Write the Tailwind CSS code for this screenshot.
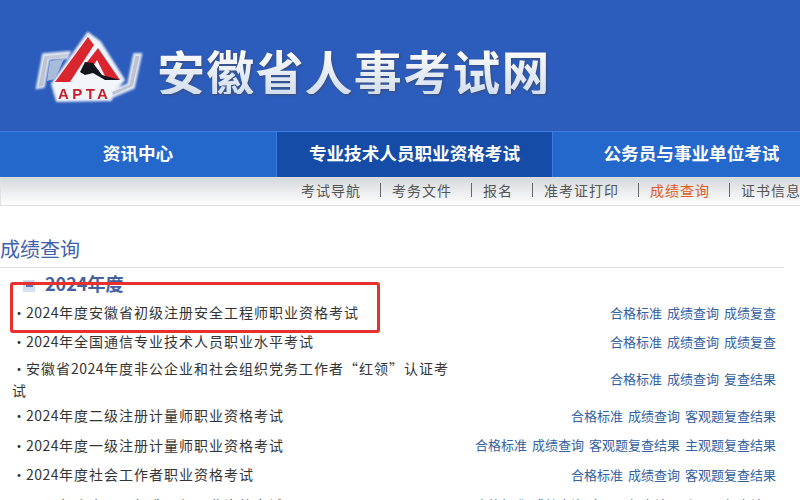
<!DOCTYPE html>
<html lang="zh-CN">
<head>
    <meta charset="UTF-8">
    <title>安徽省人事考试网</title>
    <script src="https://cdn.jsdelivr.net/npm/@tailwindcss/browser@4"></script>
</head>
<body class="w-[800px] h-[500px] overflow-hidden bg-white font-['Noto_Sans_CJK_SC',sans-serif]">
    <!-- 顶部 -->
    <header class="h-[131px] bg-[#2c5cbc] flex items-start pl-[30px] pt-[25px]">
        <svg class="w-[115px] h-[85px] shrink-0" viewBox="30 25 115 85">
            <!-- 灰色外框 -->
            <g class="blur-[1.2px]">
                <path d="M38 87 L44 55 L68 53 L66 57 L48 58 L43 86 Z" fill="#dfe6f3" stroke="#dfe6f3" stroke-width="4"/>
                <path d="M135 55 L140 55 L133 87 L112 96 L111 92 L129 85 Z" fill="#dfe6f3" stroke="#dfe6f3" stroke-width="4"/>
                <path d="M88 33 L100 42 L124 80 L113 92 L111 100 L57 101 L52 84 Z" fill="#f2f5fa" stroke="#e8edf7" stroke-width="2"/>
            </g>
            <g class="blur-[0.4px]">
                <path d="M50 61 L64 59 L55 79 L47 81 Z" fill="#a9bbdb"/>
                <path d="M38.5 87 L44.5 56 L48 56 L43 86 Z" fill="#bcc3cf"/>
                <path d="M45 56 L68 54 L66 57 L47 59 Z" fill="#c5cbd6"/>
                <path d="M135.5 56 L139.5 56 L132.5 86 L113 95 L112 92 L129.5 85 Z" fill="#bcc3cf"/>
                <path d="M88 37 L94 45 L70 82 L55 82 Z" fill="#d8252e"/>
                <path d="M98 48 L120 80 L107 80 L97 60 L88 74 L84 66 Z" fill="#d8252e"/>
                <path d="M80 72 L85 62 L93 63 L102 75 L120 80 L105 80 L93 73 L85 75 Z" fill="#15151d"/>
            </g>
            <text x="58" y="99" font-size="15" font-weight="700" letter-spacing="3.4" fill="#c4202c" font-family="Liberation Sans" class="blur-[0.4px]">APTA</text>
        </svg>
        <h1 class="ml-[12px] mt-[21px] text-[48px] leading-none font-bold tracking-[1.2px] bg-gradient-to-b from-white to-[#d3deed] bg-clip-text text-transparent drop-shadow-[1px_1px_1px_#3d4c72]">安徽省人事考试网</h1>
    </header>

    <!-- 主导航 -->
    <nav class="h-[46px] flex w-[830px] bg-[#2468cc] border-t border-[#3f7ade] text-white text-[17.6px] font-bold">
        <a class="w-[276px] flex items-center justify-center pb-[2px]">资讯中心</a>
        <a class="w-[277px] flex items-center justify-center pb-[2px] bg-[#144ca8] border-x border-[#3f7ade]">专业技术人员职业资格考试</a>
        <a class="w-[277px] flex items-center justify-center pb-[2px]">公务员与事业单位考试</a>
    </nav>

    <!-- 子导航 -->
    <div class="h-[29px] w-[860px] flex items-center pl-[300px] pb-[3px] border-y border-l border-[#e0e0e0] bg-gradient-to-b from-[#d6d9dc] to-white text-[14px] tracking-[1px] text-[#555] whitespace-nowrap">
        <a>考试导航</a><i class="w-px h-[14px] bg-[#666] ml-[19px] mr-[11px]"></i>
        <a>考务文件</a><i class="w-px h-[14px] bg-[#666] ml-[19px] mr-[11px]"></i>
        <a>报名</a><i class="w-px h-[14px] bg-[#666] ml-[19px] mr-[11px]"></i>
        <a>准考证打印</a><i class="w-px h-[14px] bg-[#666] ml-[19px] mr-[11px]"></i>
        <a class="text-[#e0581c]">成绩查询</a><i class="w-px h-[14px] bg-[#666] ml-[19px] mr-[11px]"></i>
        <a>证书信息</a>
    </div>

    <main class="relative pt-[30px]">
        <h2 class="h-[32px] border-b border-[#ddd] text-[20px] leading-[26px] text-[#3d62ab] w-[784px]">成绩查询</h2>
        <div class="h-[30px] flex items-center pl-[23px]">
            <span class="w-[12px] h-[12px] mt-[6px] bg-gradient-to-b from-[#bccbe8] to-[#dbe4f4] border border-[#d3ddf0] flex items-center justify-center"><span class="w-[7px] h-[2px] bg-[#6078b0]"></span></span>
            <span class="ml-[10px] text-[18px] font-bold text-[#46609f]">2024年度</span>
        </div>
        <ul class="w-[776px] text-[14px] tracking-[1px] text-[#333]">
            <li class="h-[29px] flex items-center justify-between pl-[12px]">
                <span><span class="inline-block w-[14px] text-center">·</span><span class="tracking-[0.5px]">2024</span>年度安徽省初级注册安全工程师职业资格考试</span>
                <span class="flex gap-[5px] text-[13px] tracking-normal text-[#33619f]"><a>合格标准</a><a>成绩查询</a><a>成绩复查</a></span>
            </li>
            <li class="h-[29px] flex items-center justify-between pl-[12px]">
                <span><span class="inline-block w-[14px] text-center">·</span><span class="tracking-[0.5px]">2024</span>年全国通信专业技术人员职业水平考试</span>
                <span class="flex gap-[5px] text-[13px] tracking-normal text-[#33619f]"><a>合格标准</a><a>成绩查询</a><a>成绩复查</a></span>
            </li>
            <li class="h-[45px] flex items-center justify-between pl-[12px]">
                <span class="w-[440px] leading-[22px]"><span class="inline-block w-[14px] text-center">·</span>安徽省<span class="tracking-[0.5px]">2024</span>年度非公企业和社会组织党务工作者“红领”认证考试</span>
                <span class="flex gap-[5px] text-[13px] tracking-normal text-[#33619f]"><a>合格标准</a><a>成绩查询</a><a>复查结果</a></span>
            </li>
            <li class="h-[29px] flex items-center justify-between pl-[12px]">
                <span><span class="inline-block w-[14px] text-center">·</span><span class="tracking-[0.5px]">2024</span>年度二级注册计量师职业资格考试</span>
                <span class="flex gap-[5px] text-[13px] tracking-normal text-[#33619f]"><a>合格标准</a><a>成绩查询</a><a>客观题复查结果</a></span>
            </li>
            <li class="h-[30px] flex items-center justify-between pl-[12px]">
                <span><span class="inline-block w-[14px] text-center">·</span><span class="tracking-[0.5px]">2024</span>年度一级注册计量师职业资格考试</span>
                <span class="flex gap-[5px] text-[13px] tracking-normal text-[#33619f]"><a>合格标准</a><a>成绩查询</a><a>客观题复查结果</a><a>主观题复查结果</a></span>
            </li>
            <li class="h-[29px] flex items-center justify-between pl-[12px]">
                <span><span class="inline-block w-[14px] text-center">·</span><span class="tracking-[0.5px]">2024</span>年度社会工作者职业资格考试</span>
                <span class="flex gap-[5px] text-[13px] tracking-normal text-[#33619f]"><a>合格标准</a><a>成绩查询</a><a>客观题复查结果</a></span>
            </li>
            <li class="h-[29px] flex items-center justify-between pl-[12px] pt-[3px]">
                <span><span class="inline-block w-[14px] text-center">·</span><span class="tracking-[0.5px]">2024</span>年度全国一级造价师职业资格考试</span>
                <span class="flex gap-[5px] text-[13px] tracking-normal text-[#33619f]"><a>合格标准</a><a>成绩查询</a><a>客观题复查结果</a><a>主观题复查结果</a></span>
            </li>
        </ul>
        <!-- 截图上的红框标注 -->
        <div class="absolute left-[10px] top-[76px] w-[370px] h-[51px] border-[3px] border-[#e8302c] rounded-[3px]"></div>
    </main>
</body>
</html>
